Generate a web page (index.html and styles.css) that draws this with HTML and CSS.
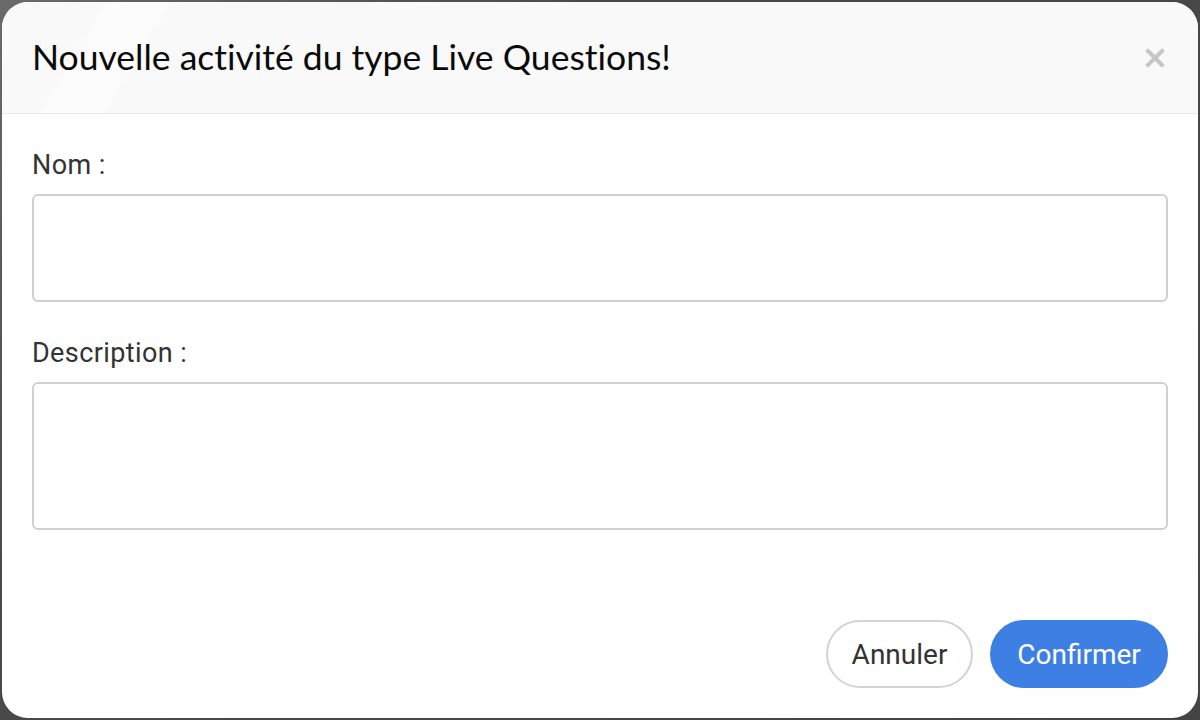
FILE: index.html
```html
<!DOCTYPE html>
<html lang="fr">
<head>
<meta charset="utf-8">
<title>Nouvelle activité</title>
<link rel="stylesheet" href="styles.css">
</head>
<body>
<div class="backdrop">
  <div class="modal">
    <header class="modal-header">
      <h1 class="modal-title">Nouvelle activité du type Live Questions!</h1>
      <button class="close" aria-label="Fermer">
        <svg width="20" height="20" viewBox="0 0 20 20"><path d="M3 3 L17 17 M17 3 L3 17" stroke="#c6c6c6" stroke-width="4" stroke-linecap="square"/></svg>
      </button>
    </header>
    <div class="modal-body">
      <label class="field-label">Nom :</label>
      <input class="field-input" type="text">
      <label class="field-label second">Description :</label>
      <textarea class="field-input field-area"></textarea>
    </div>
    <footer class="modal-footer">
      <button class="btn btn-cancel">Annuler</button>
      <button class="btn btn-confirm">Confirmer</button>
    </footer>
  </div>
</div>
</body>
</html>
```
FILE: styles.css
```css
html, body {
  margin: 0;
  padding: 0;
  height: 100%;
}
body {
  background: #4f4f4f;
  font-family: Roboto, "Liberation Sans", sans-serif;
}
.backdrop {
  height: 720px;
  padding: 2px;
  box-sizing: border-box;
  background: linear-gradient(135deg, #6a6a6a 0%, #4a4a4a 30%, #444 100%);
}
.modal {
  height: 716px;
  background: #fff;
  border-radius: 26px;
  overflow: hidden;
  display: flex;
  flex-direction: column;
}
.modal-header {
  height: 111px;
  flex: none;
  background: linear-gradient(120deg, #f9f9f9 0%, #f9f9f9 8%, #fcfcfc 8.5%, #fcfcfc 13%, #f9f9f9 13.5%, #f9f9f9 100%);
  border-bottom: 1px solid #e9e9e9;
  display: flex;
  align-items: center;
  justify-content: space-between;
  padding: 0 30px;
}
.modal-title {
  margin: 0 0 3px;
  font-family: Lato, "Open Sans", sans-serif;
  font-weight: 400;
  font-size: 35.5px;
  color: #0a0a0a;
  font-variant-ligatures: none;
}
.close {
  border: 0;
  background: transparent;
  padding: 0;
  margin-right: 3px;
  width: 20px;
  height: 20px;
  display: flex;
}
.modal-body {
  padding: 35px 30px 0;
  display: flex;
  flex-direction: column;
}
.field-label {
  font-size: 27px;
  line-height: 32px;
  letter-spacing: 0.4px;
  color: #333;
  margin-bottom: 13px;
}
.field-label.second {
  margin-top: 35px;
}
.field-input {
  box-sizing: border-box;
  height: 108px;
  border: 2px solid #d0d0d0;
  border-radius: 6px;
  background: #fff;
  font: inherit;
  resize: none;
  outline: none;
}
.field-area {
  height: 148px;
}
.modal-footer {
  margin-top: auto;
  padding: 0 30px 30px;
  display: flex;
  justify-content: flex-end;
  gap: 17px;
}
.btn {
  height: 68px;
  border-radius: 34px;
  font-family: Roboto, "Liberation Sans", sans-serif;
  font-size: 28px;
  padding: 0;
  box-sizing: border-box;
}
.btn-cancel {
  width: 147px;
  background: #fff;
  border: 2px solid #d3d3d3;
  color: #333;
}
.btn-confirm {
  width: 178px;
  background: #3e7fe3;
  border: 0;
  color: #fff;
}
```
